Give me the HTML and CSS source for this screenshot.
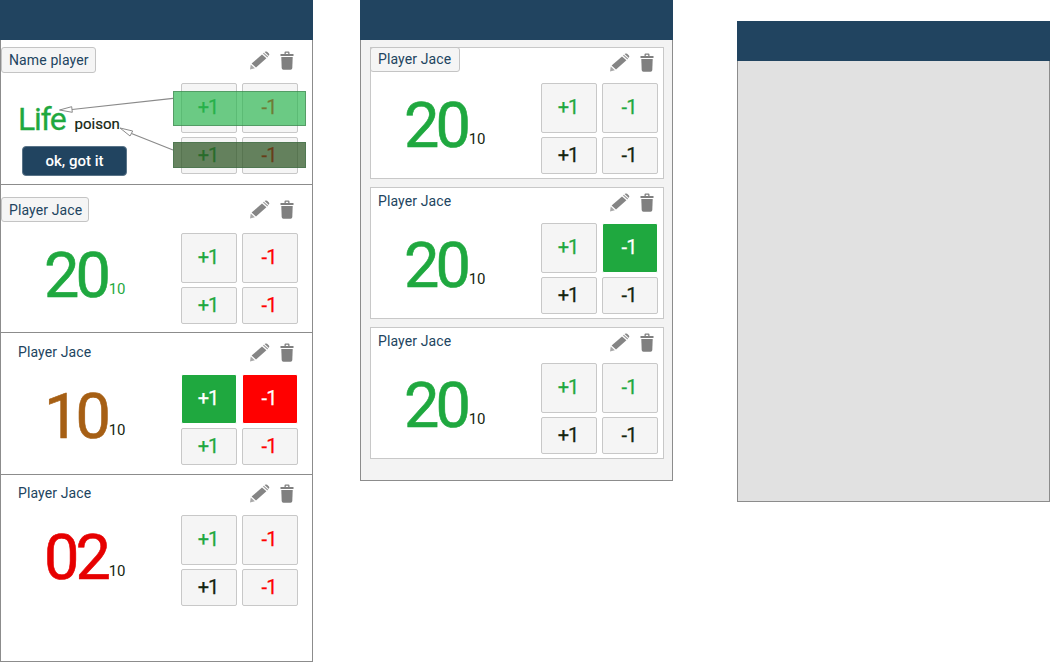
FILE: index.html
```html
<!DOCTYPE html>
<html lang="en">
<head>
  <meta charset="UTF-8" />
  <title>Life counter</title>
  <link rel="stylesheet" href="styles.css">
</head>
<body>
  <svg class="defs" width="0" height="0">
    <symbol id="pencil" viewBox="0 0 21 19">
      <path d="M1 18.6 L1.8 13.6 L5.9 17.2 Z" fill="#a8a8a8"/>
      <path d="M2.6 12.6 L13 3.4 L17.4 7.2 L7 16.4 Z" fill="#858585"/>
      <path d="M13.9 2.6 L14.8 1.8 L19.2 5.6 L18.3 6.4 Z" fill="#a0a0a0"/>
      <path d="M15.6 1.1 L16 0.8 Q17 0 18.1 0.8 L19.9 2.4 Q20.8 3.4 19.9 4.4 L19.9 4.9 Z" fill="#858585"/>
    </symbol>
    <symbol id="trash" viewBox="0 0 14 19">
      <path d="M0.5 3 H4.5 V1.6 Q4.5 0.5 5.6 0.5 H8.4 Q9.5 0.5 9.5 1.6 V3 H13.5 V5 H0.5 Z M5.8 3 H8.2 V1.7 H5.8 Z" fill="#808080" fill-rule="evenodd"/>
      <path d="M1.3 6 H12.7 L12.3 17 Q12.2 18.8 10.6 18.8 H3.4 Q1.8 18.8 1.7 17 Z" fill="#808080"/>
    </symbol>
  </svg>

  <section class="panel panel-left">
    <div class="topbar"></div>

    <div class="row row-intro">
      <div class="head">
        <button class="name-btn">Name player</button>
        <div class="tools">
          <svg class="ico-pencil"><use href="#pencil"/></svg>
          <svg class="ico-trash"><use href="#trash"/></svg>
        </div>
      </div>
      <div class="body">
        <div class="intro">
          <div class="intro-labels"><span class="life-label">Life</span> <span class="poison-label">poison</span></div>
          <button class="got-it">ok, got it</button>
        </div>
        <div class="counters">
          <button class="cnt tall plus">+1</button>
          <button class="cnt tall minus">-1</button>
          <button class="cnt plus">+1</button>
          <button class="cnt minus">-1</button>
        </div>
      </div>
      <div class="hint hint-life"></div>
      <div class="hint hint-poison"></div>
      <svg class="arrows" width="313" height="145">
        <path d="M173 58.3 L72 69.5 M173 110 L131.5 93.5" stroke="#8a8a8a" stroke-width="1.2" fill="none"/>
        <path d="M59.5 70 L71.7 66.7 L72.3 72.3 Z M120 88 L132.7 91 L130 96 Z" stroke="#8a8a8a" fill="#fff" fill-opacity=".6"/>
      </svg>
    </div>

    <div class="row row-edit">
      <div class="head">
        <button class="name-btn">Player Jace</button>
        <div class="tools">
          <svg class="ico-pencil"><use href="#pencil"/></svg>
          <svg class="ico-trash"><use href="#trash"/></svg>
        </div>
      </div>
      <div class="body">
        <div class="score green"><span class="life">20</span><span class="poison">10</span></div>
        <div class="counters">
          <button class="cnt tall plus">+1</button>
          <button class="cnt tall minus">-1</button>
          <button class="cnt plus">+1</button>
          <button class="cnt minus">-1</button>
        </div>
      </div>
    </div>

    <div class="row row-mid">
      <div class="head">
        <span class="name">Player Jace</span>
        <div class="tools">
          <svg class="ico-pencil"><use href="#pencil"/></svg>
          <svg class="ico-trash"><use href="#trash"/></svg>
        </div>
      </div>
      <div class="body">
        <div class="score brown"><span class="life">10</span><span class="poison">10</span></div>
        <div class="counters">
          <button class="cnt tall on-green">+1</button>
          <button class="cnt tall on-red">-1</button>
          <button class="cnt plus">+1</button>
          <button class="cnt minus">-1</button>
        </div>
      </div>
    </div>

    <div class="row row-last">
      <div class="head">
        <span class="name">Player Jace</span>
        <div class="tools">
          <svg class="ico-pencil"><use href="#pencil"/></svg>
          <svg class="ico-trash"><use href="#trash"/></svg>
        </div>
      </div>
      <div class="body">
        <div class="score red"><span class="life">02</span><span class="poison">10</span></div>
        <div class="counters">
          <button class="cnt tall plus">+1</button>
          <button class="cnt tall minus">-1</button>
          <button class="cnt dark">+1</button>
          <button class="cnt minus">-1</button>
        </div>
      </div>
    </div>
  </section>

  <section class="panel panel-mid">
    <div class="topbar"></div>

    <div class="cards">
      <div class="card">
        <div class="head">
          <button class="name-btn">Player Jace</button>
          <div class="tools">
            <svg class="ico-pencil"><use href="#pencil"/></svg>
            <svg class="ico-trash"><use href="#trash"/></svg>
          </div>
        </div>
        <div class="body">
          <div class="score green"><span class="life">20</span><span class="poison">10</span></div>
          <div class="counters">
            <button class="cnt tall plus">+1</button>
            <button class="cnt tall plus">-1</button>
            <button class="cnt dark">+1</button>
            <button class="cnt dark">-1</button>
          </div>
        </div>
      </div>

      <div class="card">
        <div class="head">
          <span class="name">Player Jace</span>
          <div class="tools">
            <svg class="ico-pencil"><use href="#pencil"/></svg>
            <svg class="ico-trash"><use href="#trash"/></svg>
          </div>
        </div>
        <div class="body">
          <div class="score green"><span class="life">20</span><span class="poison">10</span></div>
          <div class="counters">
            <button class="cnt tall plus">+1</button>
            <button class="cnt tall on-green">-1</button>
            <button class="cnt dark">+1</button>
            <button class="cnt dark">-1</button>
          </div>
        </div>
      </div>

      <div class="card">
        <div class="head">
          <span class="name">Player Jace</span>
          <div class="tools">
            <svg class="ico-pencil"><use href="#pencil"/></svg>
            <svg class="ico-trash"><use href="#trash"/></svg>
          </div>
        </div>
        <div class="body">
          <div class="score green"><span class="life">20</span><span class="poison">10</span></div>
          <div class="counters">
            <button class="cnt tall plus">+1</button>
            <button class="cnt tall plus">-1</button>
            <button class="cnt dark">+1</button>
            <button class="cnt dark">-1</button>
          </div>
        </div>
      </div>
    </div>
  </section>

  <section class="panel panel-empty">
    <div class="topbar"></div>
  </section>
</body>
</html>
```

FILE: styles.css
```css
* {
  box-sizing: border-box;
}

html, body {
  height: 100%;
}

body {
  margin: 0;
  display: flex;
  align-items: flex-start;
  background: #fff;
  font-family: Roboto, sans-serif;
  color: #14250f;
  overflow: hidden;
}

.defs {
  position: absolute;
}

button {
  font-family: inherit;
}

/* panels */
.panel {
  width: 313px;
  border: 1px solid #8c8c8c;
  border-top: none;
}

.topbar {
  height: 40px;
  margin: 0 -1px;
  background: #214460;
}

.panel-left {
  height: 662px;
}

.panel-mid {
  height: 481px;
  margin-left: 47px;
  background: #f3f3f3;
}

.panel-empty {
  height: 481px;
  margin-top: 21px;
  margin-left: 64px;
  background: #e1e1e1;
}

/* rows of left panel */
.row {
  position: relative;
  border-bottom: 1px solid #8c8c8c;
}

.row-intro { height: 145px; }
.row-edit { height: 148px; }
.row-mid { height: 142px; }
.row-last { border-bottom: none; }

.head {
  display: flex;
  justify-content: space-between;
  align-items: center;
}

.row-intro .head { height: 43px; padding-top: 7px; padding-bottom: 10px; }
.row-edit .head { height: 48px; padding-top: 12px; padding-bottom: 11px; }
.row-mid .head { height: 42px; padding-top: 9px; padding-bottom: 13px; }
.row-last .head { height: 40px; padding-top: 8px; padding-bottom: 12px; }

.row-mid .body { margin-top: -1px; }

.body {
  display: flex;
  justify-content: space-between;
}

.name {
  margin-left: 17px;
  font-size: 14px;
  letter-spacing: 0.12px;
  color: #214460;
}

.name-btn {
  height: 100%;
  padding: 0 6px 0 7px;
  background: #f5f5f5;
  border: 1px solid #c4c4c4;
  border-radius: 3px;
  font-size: 14px;
  letter-spacing: 0.12px;
  color: #214460;
}

.tools {
  display: flex;
  align-items: center;
  gap: 10px;
  margin-right: 18px;
}

.ico-pencil {
  width: 21px;
  height: 19px;
}

.ico-trash {
  width: 14px;
  height: 19px;
}

/* score */
.score {
  display: flex;
  align-items: baseline;
  margin-left: 43px;
  padding-top: 8px;
}

.life {
  font-size: 63px;
  line-height: 70px;
  letter-spacing: -4px;
  -webkit-text-stroke: 0.6px;
}

.poison {
  position: relative;
  top: -3px;
  margin-left: 2px;
  font-size: 15px;
  letter-spacing: -0.3px;
}

.green { color: #1fa83f; }
.brown { color: #a65f14; }
.red { color: #e60000; }

.brown .poison,
.red .poison,
.panel-mid .poison {
  color: #14250f;
}

/* +1 / -1 buttons */
.counters {
  display: grid;
  grid-template-columns: 56px 56px;
  grid-template-rows: 50px 37px;
  gap: 4px 5px;
  margin-right: 14px;
}

.cnt {
  padding: 0 2px 2px 0;
  background: #f5f5f5;
  border: 1px solid #c8c8c8;
  border-radius: 2px;
  font-size: 20px;
  letter-spacing: -1px;
  -webkit-text-stroke: 0.25px;
}

.plus { color: #1fa83f; }
.minus { color: #f00; }
.dark { color: #14250f; }

.on-green,
.on-red {
  border: 1px solid #fff;
  color: #fff;
}

.on-green { background: #1fa83f; }
.on-red { background: #f00; }

/* intro row */
.intro {
  margin-left: 17px;
  padding-top: 16px;
}

.intro-labels {
  display: flex;
  align-items: baseline;
  gap: 9px;
}

.life-label {
  font-size: 32px;
  line-height: 40px;
  letter-spacing: -1.3px;
  color: #1fa83f;
  -webkit-text-stroke: 0.3px;
}

.poison-label {
  position: relative;
  top: -1px;
  font-size: 15px;
  -webkit-text-stroke: 0.2px;
}

.got-it {
  display: block;
  width: 105px;
  height: 30px;
  margin: 7px 0 0 4px;
  background: #214460;
  border: 1px solid #5a7488;
  border-radius: 4px;
  color: #fff;
  font-size: 15px;
  font-weight: 500;
}

.hint {
  position: absolute;
  left: 172px;
  width: 133px;
  border: 1px solid rgba(60, 110, 70, 0.5);
}

.hint-life {
  top: 51px;
  height: 35px;
  background: rgba(42, 182, 78, 0.68);
}

.hint-poison {
  top: 102px;
  height: 26px;
  background: rgba(45, 85, 35, 0.72);
}

.arrows {
  position: absolute;
  left: -1px;
  top: 0;
}

/* middle panel */
.cards {
  display: flex;
  flex-direction: column;
  gap: 8px;
  padding: 7px 8px 0 9px;
}

.card {
  height: 132px;
  background: #fff;
  border: 1px solid #c8c8c8;
}

.card .head {
  height: 35px;
  padding-top: 5px;
  padding-bottom: 11px;
}

.card .name {
  margin-left: 7px;
  margin-top: -4px;
}

.card .name-btn {
  height: 25px;
  margin: -6px 0 0 -1px;
  padding: 0 8px 2px 7px;
}

.card .tools {
  margin-right: 9px;
}

.card .counters {
  margin-right: 5px;
}

.card .score {
  margin-left: 33px;
}
```
